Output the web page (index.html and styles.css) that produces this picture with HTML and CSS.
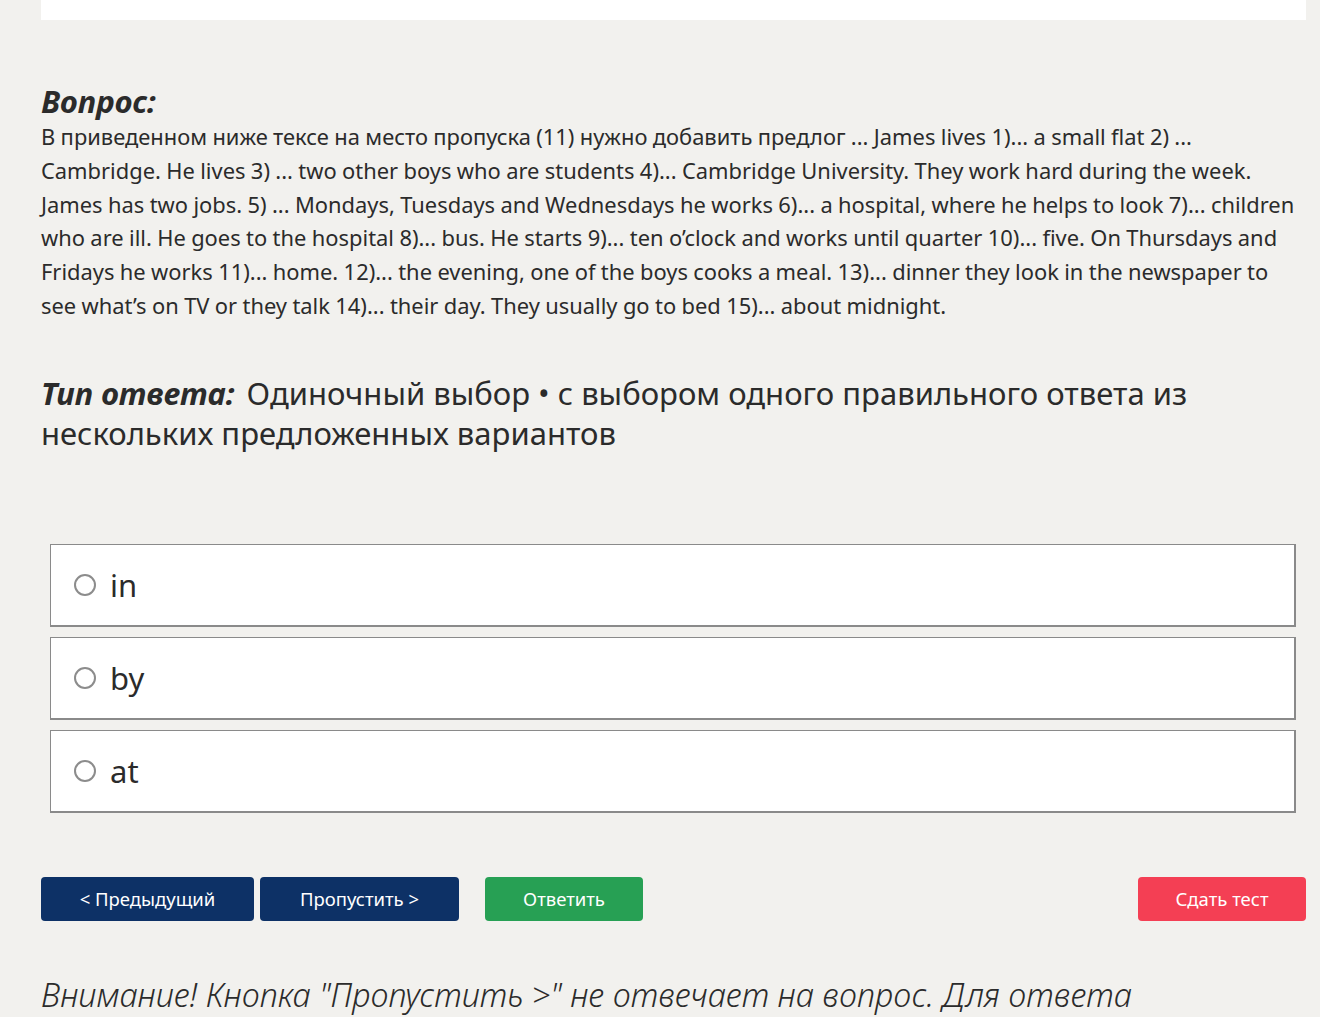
FILE: index.html
```html
<!DOCTYPE html>
<html lang="ru">

<head>
    <meta charset="UTF-8">
    <meta name="viewport" content="width=device-width, initial-scale=1.0">
    <title>Тест</title>
    <link rel="stylesheet" href="styles.css">
</head>

<body>
    <div class="page">
        <div class="top-card"></div>

        <section class="question">
            <h2 class="question-title">Вопрос:</h2>
            <p class="question-text">В приведенном ниже тексе на место пропуска (11) нужно добавить предлог ... James lives 1)... a small flat 2) ... Cambridge. He lives 3) ... two other boys who are students 4)... Cambridge University. They work hard during the week. James has two jobs. 5) ... Mondays, Tuesdays and Wednesdays he works 6)... a hospital, where he helps to look 7)... children who are ill. He goes to the hospital 8)... bus. He starts 9)... ten o’clock and works until quarter 10)... five. On Thursdays and Fridays he works 11)... home. 12)... the evening, one of the boys cooks a meal. 13)... dinner they look in the newspaper to see what’s on TV or they talk 14)... their day. They usually go to bed 15)... about midnight.</p>
        </section>

        <p class="answer-type"><b>Тип ответа:</b> Одиночный выбор • с выбором одного правильного ответа из нескольких предложенных вариантов</p>

        <div class="options">
            <label class="option"><span class="radio"></span><span>in</span></label>
            <label class="option"><span class="radio"></span><span>by</span></label>
            <label class="option"><span class="radio"></span><span>at</span></label>
        </div>

        <div class="actions">
            <button class="btn btn-prev" type="button">&lt; Предыдущий</button>
            <button class="btn btn-skip" type="button">Пропустить &gt;</button>
            <button class="btn btn-answer" type="button">Ответить</button>
            <button class="btn btn-finish" type="button">Сдать тест</button>
        </div>

        <p class="warning">Внимание! Кнопка "Пропустить &gt;" не отвечает на вопрос. Для ответа</p>
    </div>
</body>

</html>
```

FILE: styles.css
```css
* {
    box-sizing: border-box;
}

body {
    margin: 0;
    padding: 0;
    background-color: #f2f1ee;
    color: #2b2b2b;
    font-family: "Noto Sans", "Open Sans", sans-serif;
    overflow: hidden;
}

.page {
    width: 1265px;
    margin-left: 41px;
}

.top-card {
    height: 20px;
    background-color: #fff;
}

.question {
    margin-top: 62px;
}

.question-title {
    margin: 0;
    font-size: 31px;
    font-style: italic;
    font-weight: 700;
    line-height: 38px;
}

.question-text {
    margin: 0;
    font-size: 21.9px;
    line-height: 33.8px;
    word-spacing: -0.3px;
}

.answer-type {
    margin: 50px 0 0;
    font-size: 31px;
    line-height: 40px;
}

.answer-type b {
    font-style: italic;
    margin-right: 4px;
}

.options {
    display: flex;
    flex-direction: column;
    gap: 10px;
    margin: 91px 10px 0 9px;
}

.option {
    display: flex;
    align-items: center;
    gap: 14px;
    height: 83px;
    padding: 0 0 0 23px;
    background-color: #fff;
    border: 2px solid #8a8a8a;
    border-width: 1px 2px 2px 1px;
    font-size: 31px;
}

.radio {
    width: 22px;
    height: 22px;
    border: 2px solid #8c8c8c;
    border-radius: 50%;
}

.actions {
    display: flex;
    gap: 6px;
    margin-top: 64px;
}

.btn {
    height: 44px;
    padding: 0;
    border: none;
    border-radius: 4px;
    color: #fff;
    font-family: inherit;
    font-size: 18.5px;
}

.btn-prev {
    width: 213px;
    background-color: #0d3166;
}

.btn-skip {
    width: 199px;
    background-color: #0d3166;
}

.btn-answer {
    width: 158px;
    margin-left: 20px;
    background-color: #27a054;
}

.btn-finish {
    width: 168px;
    margin-left: auto;
    background-color: #f43f54;
}

.warning {
    margin: 54px 0 0;
    font-size: 32.5px;
    font-style: italic;
    font-weight: 300;
    line-height: 40px;
}
```
